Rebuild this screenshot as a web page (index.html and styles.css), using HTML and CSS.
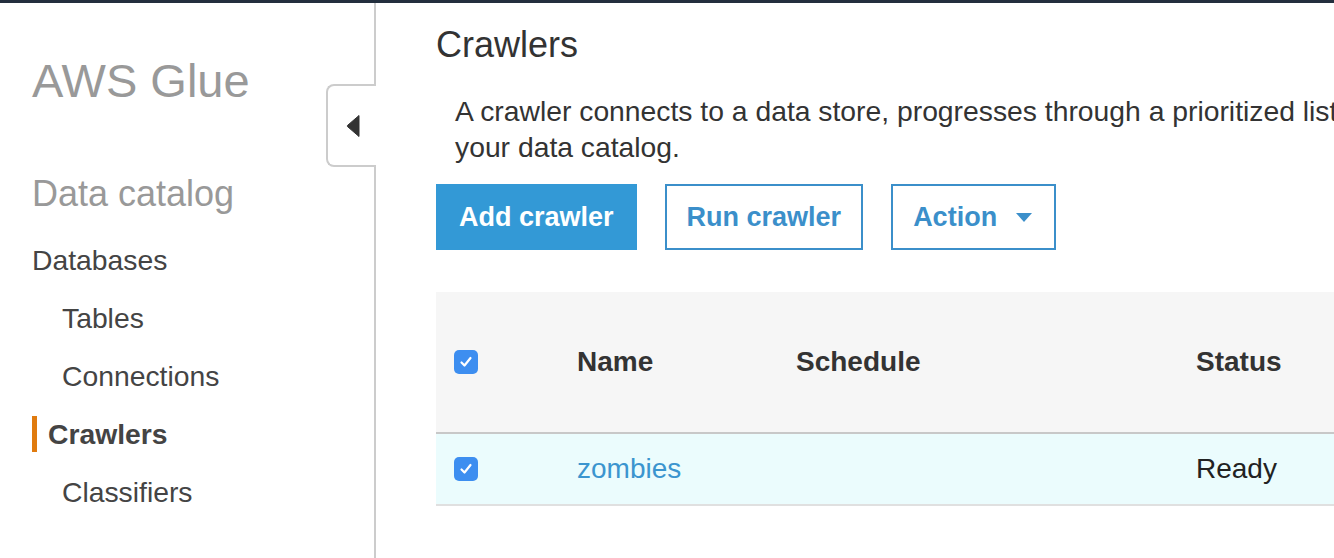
FILE: index.html
```html
<!DOCTYPE html>
<html lang="en">
<head>
<meta charset="utf-8">
<title>AWS Glue - Crawlers</title>
<link rel="stylesheet" href="styles.css">
</head>
<body>
<div class="topbar"></div>
<div class="layout">
  <aside class="sidebar">
    <div class="brand">AWS Glue</div>
    <div class="section-title">Data catalog</div>
    <nav class="nav">
      <a class="nav-item">Databases</a>
      <a class="nav-item sub">Tables</a>
      <a class="nav-item sub">Connections</a>
      <a class="nav-item active"><span class="active-label">Crawlers</span></a>
      <a class="nav-item sub">Classifiers</a>
    </nav>
    <button class="collapse" aria-label="Collapse">
      <svg width="14" height="24" viewBox="0 0 14 24"><path d="M13 1.5 L13 22.5 L1.5 12.6 Q0.8 12 1.5 11.4 Z" fill="#333" stroke="#333" stroke-width="1" stroke-linejoin="round"/></svg>
    </button>
  </aside>
  <main class="main">
    <h1 class="title">Crawlers</h1>
    <p class="desc">A crawler connects to a data store, progresses through a prioritized list of classifiers to determine the schema for your data, and then creates metadata tables in<br>your data catalog.</p>
    <div class="actions">
      <button class="btn primary">Add crawler</button>
      <button class="btn outline">Run crawler</button>
      <button class="btn outline">Action<span class="caret"></span></button>
    </div>
    <div class="table">
      <div class="row head">
        <div class="cell check"><span class="checkbox"><svg width="16" height="16" viewBox="0 0 16 16"><path d="M3.5 8.5 L6.5 11.5 L12.5 4" fill="none" stroke="#fff" stroke-width="2.2" stroke-linecap="round" stroke-linejoin="round"/></svg></span></div>
        <div class="cell">Name</div>
        <div class="cell">Schedule</div>
        <div class="cell">Status</div>
      </div>
      <div class="row body selected">
        <div class="cell check"><span class="checkbox"><svg width="16" height="16" viewBox="0 0 16 16"><path d="M3.5 8.5 L6.5 11.5 L12.5 4" fill="none" stroke="#fff" stroke-width="2.2" stroke-linecap="round" stroke-linejoin="round"/></svg></span></div>
        <div class="cell"><a class="link">zombies</a></div>
        <div class="cell"></div>
        <div class="cell">Ready</div>
      </div>
    </div>
  </main>
</div>
</body>
</html>
```

FILE: styles.css
```css
* { box-sizing: border-box; }
html, body {
  margin: 0;
  padding: 0;
  background: #fff;
  overflow: hidden;
}
body {
  font-family: "Liberation Sans", Arial, Helvetica, sans-serif;
  color: #333;
  width: 1334px;
  height: 558px;
}
.topbar {
  height: 3px;
  background: #232f3e;
}
.layout {
  display: flex;
  height: 555px;
}
.sidebar {
  position: relative;
  flex: 0 0 376px;
  border-right: 2px solid #ccc;
}
.brand {
  margin-top: 50px;
  padding-left: 32px;
  font-size: 47px;
  line-height: 56px;
  color: #999;
}
.section-title {
  margin-top: 63px;
  padding-left: 32px;
  font-size: 36px;
  line-height: 44px;
  color: #999;
}
.nav {
  margin-top: 15px;
  display: flex;
  flex-direction: column;
}
.nav-item {
  display: flex;
  align-items: center;
  height: 58px;
  padding-left: 32px;
  font-size: 28.3px;
  color: #444;
  text-decoration: none;
}
.nav-item.sub {
  padding-left: 62px;
}
.active-label {
  border-left: 5px solid #e07b0f;
  padding-left: 11px;
  line-height: 36px;
  font-weight: bold;
  color: #444;
}
.collapse {
  position: absolute;
  top: 81px;
  right: -2px;
  width: 50px;
  height: 83px;
  padding: 0;
  background: #fff;
  border: 2px solid #ccc;
  border-right: none;
  border-radius: 8px 0 0 8px;
  display: flex;
  align-items: center;
  justify-content: center;
}
.collapse svg {
  margin-left: 2px;
  margin-top: 1px;
}
.main {
  flex: 1;
  min-width: 0;
  padding-left: 60px;
  overflow: hidden;
}
.title {
  margin: 20px 0 0;
  font-size: 36px;
  line-height: 44px;
  font-weight: normal;
  color: #333;
}
.desc {
  margin: 26px 0 0;
  padding-left: 19px;
  font-size: 28.3px;
  line-height: 36px;
  white-space: nowrap;
  color: #333;
}
.actions {
  margin-top: 19px;
  display: flex;
  gap: 28px;
}
.btn {
  height: 66px;
  padding: 0 20px;
  border: 2px solid #3b8fca;
  font-family: "Liberation Sans", Arial, Helvetica, sans-serif;
  font-size: 27px;
  font-weight: bold;
  display: flex;
  align-items: center;
  border-radius: 0;
  cursor: pointer;
}
.btn.primary {
  background: #3399d6;
  border-color: #3399d6;
  color: #fff;
  padding: 0 21px;
}
.btn.outline {
  background: #fff;
  color: #3b8fca;
}
.caret {
  display: inline-block;
  margin-left: 19px;
  margin-right: 2px;
  width: 0;
  height: 0;
  border-left: 8px solid transparent;
  border-right: 8px solid transparent;
  border-top: 9px solid #3b8fca;
}
.table {
  margin-top: 42px;
  width: 1200px;
}
.row {
  display: grid;
  grid-template-columns: 141px 219px 400px 1fr;
  align-items: center;
}
.row.head {
  height: 142px;
  background: #f6f6f6;
  border-bottom: 2px solid #c8c8c8;
  font-weight: bold;
  font-size: 28px;
  color: #333;
}
.row.body {
  height: 72px;
  border-bottom: 2px solid #e0e0e0;
  font-size: 28px;
  color: #222;
}
.row.selected {
  background: #ebfcfd;
}
.cell.check {
  padding-left: 18px;
  display: flex;
  align-items: center;
}
.checkbox {
  width: 24px;
  height: 24px;
  border-radius: 5px;
  background: #3d8ef0;
  display: flex;
  align-items: center;
  justify-content: center;
}
.link {
  color: #3b95cf;
  text-decoration: none;
}
```
